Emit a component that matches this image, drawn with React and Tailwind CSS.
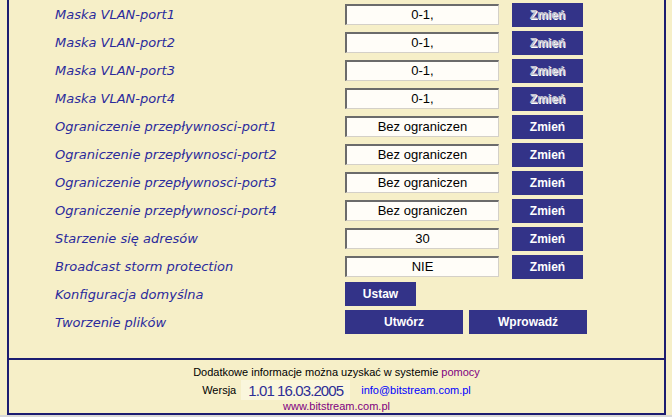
import React from 'react'

const rows = [
  { label: 'Maska VLAN-port1', value: '0-1,', disabled: true },
  { label: 'Maska VLAN-port2', value: '0-1,', disabled: true },
  { label: 'Maska VLAN-port3', value: '0-1,', disabled: true },
  { label: 'Maska VLAN-port4', value: '0-1,', disabled: true },
  { label: 'Ograniczenie przepływnosci-port1', value: 'Bez ograniczen' },
  { label: 'Ograniczenie przepływnosci-port2', value: 'Bez ograniczen' },
  { label: 'Ograniczenie przepływnosci-port3', value: 'Bez ograniczen' },
  { label: 'Ograniczenie przepływnosci-port4', value: 'Bez ograniczen' },
  { label: 'Starzenie się adresów', value: '30' },
  { label: 'Broadcast storm protection', value: 'NIE' },
]

function Label({ children }) {
  return (
    <div className="w-[336px] pl-[46px] text-[13px] italic text-[#2a2a9c] font-['DejaVu_Sans',sans-serif] leading-none">
      {children}
    </div>
  )
}

function Btn({ children, disabled, w = 'w-[71px]' }) {
  return (
    <button
      className={`${w} h-[24px] bg-[#333388] text-[12px] font-bold font-['Liberation_Sans',Arial,sans-serif] leading-none ${
        disabled ? 'text-[#c4c4d0] [text-shadow:1px_1px_0_#ffffff]' : 'text-white'
      }`}
    >
      {children}
    </button>
  )
}

export default function App() {
  return (
    <div className="bg-[#f6efc8] h-[417px] w-[672px] flex flex-col">
      <div className="mx-[7px] w-[659px] border-x-2 border-b-2 border-[#1c1c70] flex flex-col">
        <div className="flex flex-col pb-[22px]">
          {rows.map((r) => (
            <div key={r.label} className="h-[28px] flex items-center">
              <Label>{r.label}</Label>
              <div className="w-[154px] h-[21px] bg-[#fffdf8] border-t-2 border-l-2 border-b border-r border-t-[#6b6b6b] border-l-[#6b6b6b] border-b-[#d4d0c8] border-r-[#d4d0c8] flex items-center justify-center text-[13px] text-black font-['Liberation_Sans',Arial,sans-serif]">
                {r.value}
              </div>
              <div className="ml-[13px]">
                <Btn disabled={r.disabled}>Zmień</Btn>
              </div>
            </div>
          ))}
          <div className="h-[28px] flex items-center">
            <Label>Konfiguracja domyślna</Label>
            <Btn>Ustaw</Btn>
          </div>
          <div className="h-[28px] flex items-center">
            <Label>Tworzenie plików</Label>
            <div className="flex gap-[6px]">
              <Btn w="w-[118px]">Utwórz</Btn>
              <Btn w="w-[118px]">Wprowadź</Btn>
            </div>
          </div>
        </div>
        <div className="border-t-2 border-[#1c1c70] h-[55px] flex flex-col items-center pt-[6px] font-['Liberation_Sans',Arial,sans-serif] text-[11px] leading-none">
          <div className="h-[13px] flex items-center text-black">
            Dodatkowe informacje można uzyskać w systemie&nbsp;<span className="text-[#800080]">pomocy</span>
          </div>
          <div className="h-[20px] flex items-center mt-[1px]">
            <span className="text-black">Wersja</span>
            <span className="ml-[5px] w-[109px] h-[20px] bg-[#faf6dc] flex items-center justify-center text-[15px] tracking-[-0.9px] text-[#2e2e96]">
              1.01 16.03.2005
            </span>
            <span className="ml-[11px] text-[#0000ff]">info@bitstream.com.pl</span>
          </div>
          <div className="h-[12px] flex items-center text-[#800080]">www.bitstream.com.pl</div>
        </div>
      </div>
      <div className="mt-auto h-[2px] bg-[#d8d8d8]"></div>
    </div>
  )
}
